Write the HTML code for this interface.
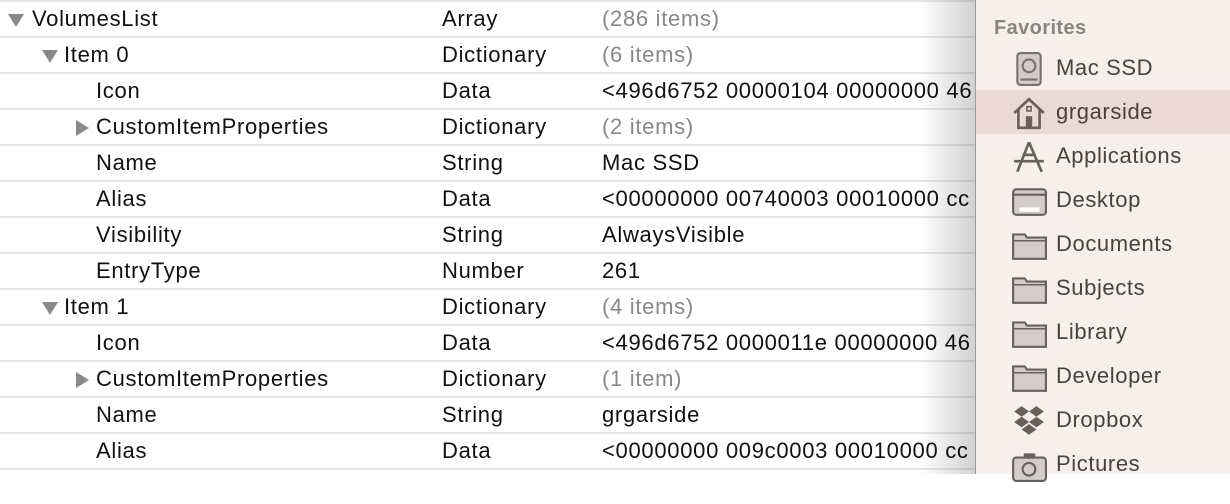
<!DOCTYPE html><html><head><style>
body{margin:0;width:1230px;height:474px;overflow:hidden;background:#fff;font-family:"Liberation Sans",sans-serif;position:relative}
.r{position:absolute;left:0;width:976px;height:36px;border-top:2px solid #e6e6e6;box-sizing:border-box;font-size:22px;letter-spacing:0.7px;color:#111}
.r span{position:absolute;top:4px;white-space:nowrap}
.g{color:#888}
.t{position:absolute;top:12px;width:0;height:0}
.d{border-left:8px solid transparent;border-right:8px solid transparent;border-top:13px solid #8a8a8a}
.rt{border-top:8px solid transparent;border-bottom:8px solid transparent;border-left:13px solid #8a8a8a;top:10px}
.sh{position:absolute;left:920px;top:0;width:55px;height:474px;background:linear-gradient(to right,rgba(0,0,0,0),rgba(0,0,0,0.18))}
.sb{position:absolute;left:975px;top:0;width:255px;height:474px;background:#f7efec;border-left:1px solid #9c9c9c;box-sizing:border-box}
.fav{position:absolute;left:18px;top:17px;font-size:20px;letter-spacing:0.4px;font-weight:bold;color:#8d8280}
.it{position:absolute;left:0;width:255px;height:44px;font-size:22px;letter-spacing:0.6px;color:#4b403d}
.it span{position:absolute;left:80px;top:9px}
.it svg{position:absolute;left:35px;top:5px}
.sel{background:#ebd9d3}
</style></head><body>
<div class="r" style="top:0"><div class="t d" style="left:8px"></div><span style="left:32px">VolumesList</span><span style="left:442px">Array</span><span class="g" style="left:602px">(286 items)</span></div>
<div class="r" style="top:36px"><div class="t d" style="left:42px"></div><span style="left:64px">Item 0</span><span style="left:442px">Dictionary</span><span class="g" style="left:602px">(6 items)</span></div>
<div class="r" style="top:72px"><span style="left:96px">Icon</span><span style="left:442px">Data</span><span style="left:602px">&lt;496d6752 00000104 00000000 46</span></div>
<div class="r" style="top:108px"><div class="t rt" style="left:76px"></div><span style="left:96px">CustomItemProperties</span><span style="left:442px">Dictionary</span><span class="g" style="left:602px">(2 items)</span></div>
<div class="r" style="top:144px"><span style="left:96px">Name</span><span style="left:442px">String</span><span style="left:602px">Mac SSD</span></div>
<div class="r" style="top:180px"><span style="left:96px">Alias</span><span style="left:442px">Data</span><span style="left:602px">&lt;00000000 00740003 00010000 cc</span></div>
<div class="r" style="top:216px"><span style="left:96px">Visibility</span><span style="left:442px">String</span><span style="left:602px">AlwaysVisible</span></div>
<div class="r" style="top:252px"><span style="left:96px">EntryType</span><span style="left:442px">Number</span><span style="left:602px">261</span></div>
<div class="r" style="top:288px"><div class="t d" style="left:42px"></div><span style="left:64px">Item 1</span><span style="left:442px">Dictionary</span><span class="g" style="left:602px">(4 items)</span></div>
<div class="r" style="top:324px"><span style="left:96px">Icon</span><span style="left:442px">Data</span><span style="left:602px">&lt;496d6752 0000011e 00000000 46</span></div>
<div class="r" style="top:360px"><div class="t rt" style="left:76px"></div><span style="left:96px">CustomItemProperties</span><span style="left:442px">Dictionary</span><span class="g" style="left:602px">(1 item)</span></div>
<div class="r" style="top:396px"><span style="left:96px">Name</span><span style="left:442px">String</span><span style="left:602px">grgarside</span></div>
<div class="r" style="top:432px"><span style="left:96px">Alias</span><span style="left:442px">Data</span><span style="left:602px">&lt;00000000 009c0003 00010000 cc</span></div>
<div class="r" style="top:468px"></div>
<div class="sh"></div>
<div class="sb">
<div class="fav">Favorites</div>
<div class="it" style="top:46px"><svg width="36" height="36" viewBox="0 0 34 34"><rect x="6" y="2" width="22" height="30" rx="3" fill="#d4ccca" stroke="#7a706d" stroke-width="2"/><circle cx="17" cy="14" r="6" fill="none" stroke="#7a706d" stroke-width="2"/><path d="M9 27 H25" stroke="#7a706d" stroke-width="2"/></svg><span>Mac SSD</span></div>
<div class="it sel" style="top:90px"><svg width="36" height="36" viewBox="0 0 34 34"><path d="M3 17 L17 4 L31 17 M7 14 V31 H27 V14" fill="none" stroke="#6b5f5c" stroke-width="2.5"/><rect x="14" y="20" width="6" height="11" fill="#6b5f5c"/><rect x="15" y="11" width="4" height="4" fill="none" stroke="#6b5f5c" stroke-width="1.5"/></svg><span>grgarside</span></div>
<div class="it" style="top:134px"><svg width="36" height="36" viewBox="0 0 34 34"><path d="M17 3 L6 31 M17 3 L29 31 M3 21 H31 M11 15 H23" fill="none" stroke="#6b5f5c" stroke-width="2.5"/></svg><span>Applications</span></div>
<div class="it" style="top:178px"><svg width="36" height="36" viewBox="0 0 34 34"><rect x="2" y="6" width="31" height="24" rx="3" fill="#d4ccca" stroke="#6b5f5c" stroke-width="2"/><path d="M2 11 H33" stroke="#6b5f5c" stroke-width="2"/><rect x="8" y="23" width="19" height="4" fill="#fff"/></svg><span>Desktop</span></div>
<div class="it" style="top:222px"><svg width="36" height="36" viewBox="0 0 34 34"><path d="M2 7 H13 L15 10 H33 V30 H2 Z" fill="#d4ccca" stroke="#6b5f5c" stroke-width="2"/><path d="M2 13 H33" stroke="#6b5f5c" stroke-width="1.5"/></svg><span>Documents</span></div>
<div class="it" style="top:266px"><svg width="36" height="36" viewBox="0 0 34 34"><path d="M2 7 H13 L15 10 H33 V30 H2 Z" fill="#d4ccca" stroke="#6b5f5c" stroke-width="2"/><path d="M2 13 H33" stroke="#6b5f5c" stroke-width="1.5"/></svg><span>Subjects</span></div>
<div class="it" style="top:310px"><svg width="36" height="36" viewBox="0 0 34 34"><path d="M2 7 H13 L15 10 H33 V30 H2 Z" fill="#d4ccca" stroke="#6b5f5c" stroke-width="2"/><path d="M2 13 H33" stroke="#6b5f5c" stroke-width="1.5"/></svg><span>Library</span></div>
<div class="it" style="top:354px"><svg width="36" height="36" viewBox="0 0 34 34"><path d="M2 7 H13 L15 10 H33 V30 H2 Z" fill="#d4ccca" stroke="#6b5f5c" stroke-width="2"/><path d="M2 13 H33" stroke="#6b5f5c" stroke-width="1.5"/></svg><span>Developer</span></div>
<div class="it" style="top:398px"><svg width="36" height="36" viewBox="0 0 34 34"><path d="M10 3 L17 8 L10 13 L3 8 Z M24 3 L31 8 L24 13 L17 8 Z M10 13 L17 18 L10 23 L3 18 Z M24 13 L31 18 L24 23 L17 18 Z M17 20 L24 25 L17 30 L10 25 Z" fill="#6b5f5c"/></svg><span>Dropbox</span></div>
<div class="it" style="top:442px"><svg width="36" height="36" viewBox="0 0 34 34"><rect x="2" y="10" width="31" height="22" rx="3" fill="#d4ccca" stroke="#6b5f5c" stroke-width="2"/><rect x="12" y="6" width="11" height="5" fill="#6b5f5c"/><circle cx="17" cy="21" r="6" fill="none" stroke="#6b5f5c" stroke-width="2"/></svg><span>Pictures</span></div>
</div>
</body></html>
